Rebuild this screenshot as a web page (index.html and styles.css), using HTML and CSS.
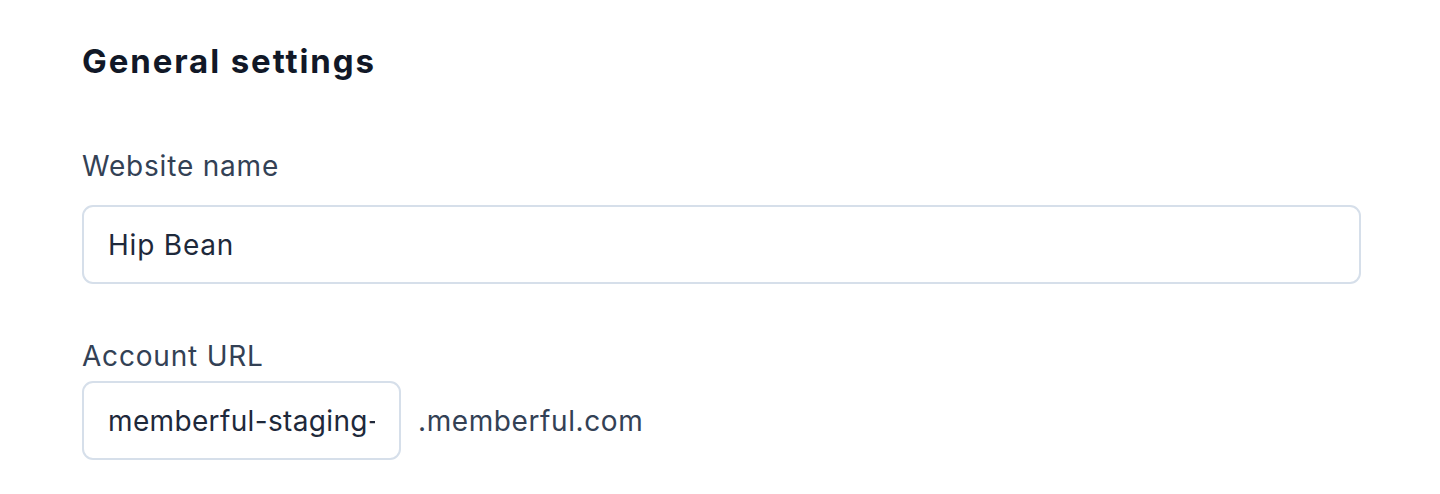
FILE: index.html
```html
<!DOCTYPE html>
<html>
<head>
<meta charset="utf-8">
<link rel="stylesheet" href="styles.css">
</head>
<body>
<div class="page">
  <h1 class="title">General settings</h1>
  <div class="field first">
    <label class="label">Website name</label>
    <div class="input wide"><span class="value">Hip Bean</span></div>
  </div>
  <div class="field second">
    <label class="label">Account URL</label>
    <div class="row">
      <div class="input narrow"><span class="value">memberful-staging-</span></div>
      <span class="suffix">.memberful.com</span>
    </div>
  </div>
</div>
</body>
</html>
```
FILE: styles.css
```css
html, body {
  margin: 0;
  padding: 0;
  background: #ffffff;
}
body {
  font-family: "Inter", "Liberation Sans", sans-serif;
  color: #1e293b;
}
.page {
  padding: 41px 80px 0 82px;
}
.title {
  margin: 0;
  font-size: 33px;
  font-weight: 700;
  letter-spacing: 1.9px;
  color: #111827;
  line-height: 40px;
}
.field.first {
  margin-top: 68px;
}
.field.second {
  margin-top: 55px;
}
.label {
  display: block;
  font-size: 28px;
  letter-spacing: 0.8px;
  color: #334155;
  line-height: 34px;
  margin-bottom: 22px;
}
.field.second .label {
  margin-bottom: 8px;
}
.input {
  box-sizing: border-box;
  height: 79px;
  border: 2px solid #d6dfea;
  border-radius: 11px;
  padding: 0 24px;
  display: flex;
  align-items: center;
  font-size: 28px;
  letter-spacing: 0.8px;
  color: #1e293b;
}
.value {
  flex: 1;
  min-width: 0;
  white-space: nowrap;
  overflow: hidden;
}
.input.wide {
  width: 1279px;
}
.input.narrow {
  width: 319px;
  letter-spacing: 0.35px;
}
.row {
  display: flex;
  align-items: center;
  gap: 17px;
}
.suffix {
  font-size: 28px;
  letter-spacing: 0.6px;
  color: #334155;
}
```
